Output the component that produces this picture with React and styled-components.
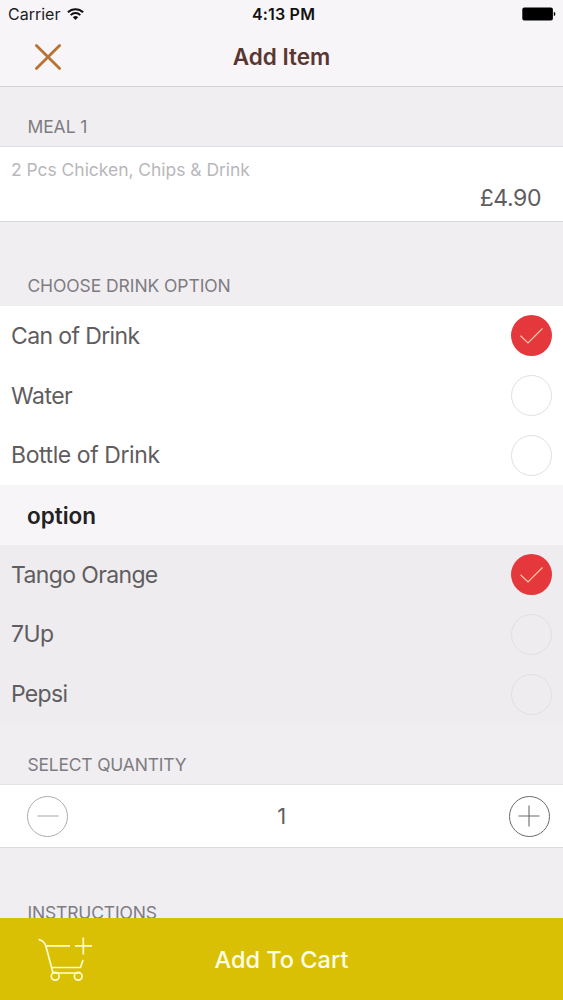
import styled, { createGlobalStyle } from "styled-components";

const COLORS = {
  page: "#f0eef1",
  bar: "#f7f5f8",
  line: "#d9d7db",
  text: "#5f5d60",
  muted: "#7e7c81",
  faint: "#b9b7bb",
  title: "#5a3631",
  close: "#b87333",
  red: "#e5383d",
  cart: "#d9c005",
};

const DRINKS = [
  { label: "Can of Drink", checked: true, spacing: -0.62 },
  { label: "Water", spacing: -0.5 },
  { label: "Bottle of Drink", spacing: -0.42 },
];

const FLAVOURS = [
  { label: "Tango Orange", checked: true, spacing: -0.64 },
  { label: "7Up", spacing: -0.6 },
  { label: "Pepsi", spacing: -0.7 },
];

function Options({ items, shaded }) {
  return (
    <OptionList $shaded={shaded}>
      {items.map(({ label, checked, spacing }) => (
        <OptionRow key={label}>
          <Label $spacing={spacing}>{label}</Label>
          <Radio $checked={checked}>
            {checked && (
              <svg width="41" height="41" viewBox="0 0 41 41" fill="none">
                <path d="M9.5 20.8 L17 28 L31.5 13.5" stroke="#ffc9a8" strokeWidth="1.2" />
              </svg>
            )}
          </Radio>
        </OptionRow>
      ))}
    </OptionList>
  );
}

export default function App() {
  return (
    <>
      <GlobalStyle />
      <Screen>
        <StatusBar>
          <Carrier>
            <span>Carrier</span>
            <svg width="17" height="12" viewBox="0 0 17 12" fill="none">
              <path d="M0.9 4.3 A10.8 10.8 0 0 1 16.1 4.3" stroke="#111" strokeWidth="2" />
              <path d="M3.7 7.1 A6.8 6.8 0 0 1 13.3 7.1" stroke="#111" strokeWidth="2" />
              <path d="M8.5 12 L5.8 9.3 A3.8 3.8 0 0 1 11.2 9.3 Z" fill="#111" />
            </svg>
          </Carrier>
          <Time>4:13 PM</Time>
          <BatterySlot>
            <svg width="34" height="14" viewBox="0 0 34 14">
              <rect x="0.3" y="0.5" width="30.6" height="13" rx="2" fill="#000" />
              <path d="M31.8 4.8 Q33.4 5.4 33.4 7 Q33.4 8.6 31.8 9.2 Z" fill="#000" />
            </svg>
          </BatterySlot>
        </StatusBar>
        <NavBar>
          <CloseButton aria-label="Close">
            <svg width="28" height="28" viewBox="0 0 28 28">
              <path
                d="M2.4 2.4 L25.6 25.6 M25.6 2.4 L2.4 25.6"
                stroke={COLORS.close}
                strokeWidth="2.8"
                strokeLinecap="round"
              />
            </svg>
          </CloseButton>
          <Title>Add Item</Title>
        </NavBar>

        <SectionHeader $height={59} $bottom={8} $spacing={-0.05}>MEAL 1</SectionHeader>
        <MealCard>
          <Description>2 Pcs Chicken, Chips &amp; Drink</Description>
          <Price>£4.90</Price>
        </MealCard>

        <SectionHeader $height={84} $spacing={-0.08}>CHOOSE DRINK OPTION</SectionHeader>
        <Options items={DRINKS} />
        <OptionHeader>option</OptionHeader>
        <Options items={FLAVOURS} shaded />

        <SectionHeader $height={60.2} $spacing={-0.2}>SELECT QUANTITY</SectionHeader>
        <QuantityRow>
          <StepButton $color="#b3a9b4" aria-label="Less">
            <svg width="22" height="22" viewBox="0 0 22 22">
              <path d="M0.5 11 H21.5" stroke="currentColor" strokeWidth="1.1" />
            </svg>
          </StepButton>
          <Quantity>1</Quantity>
          <StepButton $color="#6c696e" aria-label="More">
            <svg width="22" height="22" viewBox="0 0 22 22">
              <path d="M0.5 11 H21.5 M11 0.5 V21.5" stroke="currentColor" strokeWidth="1.1" />
            </svg>
          </StepButton>
        </QuantityRow>

        <SectionHeader $height={85} $bottom={9.6} $spacing={-0.15}>INSTRUCTIONS</SectionHeader>
        <CartBar>
          <CartIcon width="56" height="46" viewBox="0 0 56 46" fill="none">
            <path
              d="M1.5 2.5 Q7 3.5 8.8 8.8 L14.7 31 M8.8 8.8 H33 M14 30.5 H43.5 L46 23 M14.7 31 L16 36 H43.5"
              stroke="#fffbd0"
              strokeWidth="1.7"
            />
            <circle cx="18.2" cy="39.3" r="3.9" stroke="#fffbd0" strokeWidth="1.7" />
            <circle cx="41.2" cy="39.3" r="3.9" stroke="#fffbd0" strokeWidth="1.7" />
            <path d="M38 8.8 H55 M46.3 0.5 V17.5" stroke="#fffbd0" strokeWidth="1.7" />
          </CartIcon>
          <CartText>Add To Cart</CartText>
        </CartBar>
      </Screen>
    </>
  );
}

const GlobalStyle = createGlobalStyle`
  body {
    margin: 0;
    overflow: hidden;
    font-family: Inter, "Liberation Sans", sans-serif;
  }

  svg {
    display: block;
    flex: none;
  }
`;

const Screen = styled.div`
  width: 563px;
  height: 1000px;
  display: flex;
  flex-direction: column;
  overflow: hidden;
  background: ${COLORS.page};
`;

const StatusBar = styled.div`
  flex: none;
  display: grid;
  grid-template-columns: 1fr auto 1fr;
  align-items: center;
  height: 28px;
  padding: 0 7px 0 8px;
  background: ${COLORS.bar};
  color: #1c1c1e;
  font-size: 16px;
`;

const Carrier = styled.div`
  display: flex;
  align-items: center;
  gap: 7px;
`;

const Time = styled.span`
  padding-left: 3px;
  font-weight: 600;
  letter-spacing: 0.2px;
  color: #111;
`;

const BatterySlot = styled.div`
  justify-self: end;
`;

const NavBar = styled.div`
  flex: none;
  box-sizing: border-box;
  display: grid;
  grid-template-columns: 1fr auto 1fr;
  align-items: center;
  height: 59px;
  padding: 0 33.5px;
  border-bottom: 1px solid #d3d1d5;
  background: ${COLORS.bar};
`;

const CloseButton = styled.button`
  justify-self: start;
  padding: 0;
  border: 0;
  background: none;
`;

const Title = styled.h1`
  margin: 0;
  font-size: 22.5px;
  font-weight: 600;
  line-height: 28px;
  color: ${COLORS.title};
`;

const SectionHeader = styled.h2`
  flex: none;
  box-sizing: border-box;
  display: flex;
  align-items: flex-end;
  height: ${({ $height }) => $height}px;
  margin: 0;
  padding: 0 27.4px ${({ $bottom = 8.6 }) => $bottom}px;
  font-size: 17.5px;
  font-weight: 400;
  line-height: 22px;
  letter-spacing: ${({ $spacing }) => $spacing}px;
  color: ${COLORS.muted};
`;

const MealCard = styled.section`
  flex: none;
  box-sizing: border-box;
  display: flex;
  flex-direction: column;
  height: 76px;
  padding: 12px 22px 0 11px;
  border-top: 1px solid #e0dee2;
  border-bottom: 1px solid ${COLORS.line};
  background: #fff;
`;

const Description = styled.span`
  font-size: 17.5px;
  line-height: 22px;
  letter-spacing: -0.04px;
  color: ${COLORS.faint};
`;

const Price = styled.span`
  align-self: flex-end;
  margin-top: 2px;
  font-size: 23px;
  line-height: 30px;
  letter-spacing: -0.4px;
  color: ${COLORS.text};
`;

const OptionList = styled.ul`
  flex: none;
  margin: 0;
  padding: 0;
  list-style: none;
  background: ${({ $shaded }) => ($shaded ? "#eeecef" : "#fff")};
`;

const OptionRow = styled.li`
  display: flex;
  align-items: center;
  justify-content: space-between;
  height: 59.7px;
  padding: 0 11px;
`;

const Label = styled.span`
  padding-top: 1px;
  font-size: 23px;
  line-height: 29px;
  letter-spacing: ${({ $spacing }) => $spacing}px;
  color: ${COLORS.text};
`;

const Radio = styled.span`
  box-sizing: border-box;
  display: flex;
  align-items: center;
  justify-content: center;
  width: 41px;
  height: 41px;
  border: ${({ $checked }) => ($checked ? "0" : "1px solid #e2dfe3")};
  border-radius: 50%;
  background: ${({ $checked }) => ($checked ? COLORS.red : "none")};
`;

const OptionHeader = styled.h3`
  flex: none;
  box-sizing: border-box;
  display: flex;
  align-items: center;
  height: 59.8px;
  margin: 0;
  padding: 2px 27px 0;
  background: ${COLORS.bar};
  font-size: 22.5px;
  font-weight: 600;
  line-height: 28px;
  color: #222123;
`;

const QuantityRow = styled.div`
  flex: none;
  box-sizing: border-box;
  display: grid;
  grid-template-columns: 41px 1fr 41px;
  align-items: center;
  height: 64px;
  padding: 0 13.5px 0 27px;
  border-top: 1px solid #e4e2e6;
  border-bottom: 1px solid #dddbdf;
  background: #fff;
  font-size: 22px;
  color: ${COLORS.text};
`;

const Quantity = styled.span`
  padding-right: 13px;
  line-height: 26px;
  text-align: center;
`;

const StepButton = styled.button`
  box-sizing: border-box;
  display: flex;
  align-items: center;
  justify-content: center;
  width: 41px;
  height: 41px;
  padding: 0;
  border: 1px solid currentColor;
  border-radius: 50%;
  background: none;
  color: ${({ $color }) => $color};
`;

const CartBar = styled.footer`
  flex: none;
  display: grid;
  grid-template-columns: 1fr auto 1fr;
  align-items: center;
  height: 82px;
  margin-top: -15px;
  padding: 0 37px;
  background: ${COLORS.cart};
  z-index: 1;
`;

const CartIcon = styled.svg`
  margin-top: 2px;
`;

const CartText = styled.span`
  font-size: 23.5px;
  font-weight: 500;
  letter-spacing: 0.02px;
  color: #fffde6;
`;
